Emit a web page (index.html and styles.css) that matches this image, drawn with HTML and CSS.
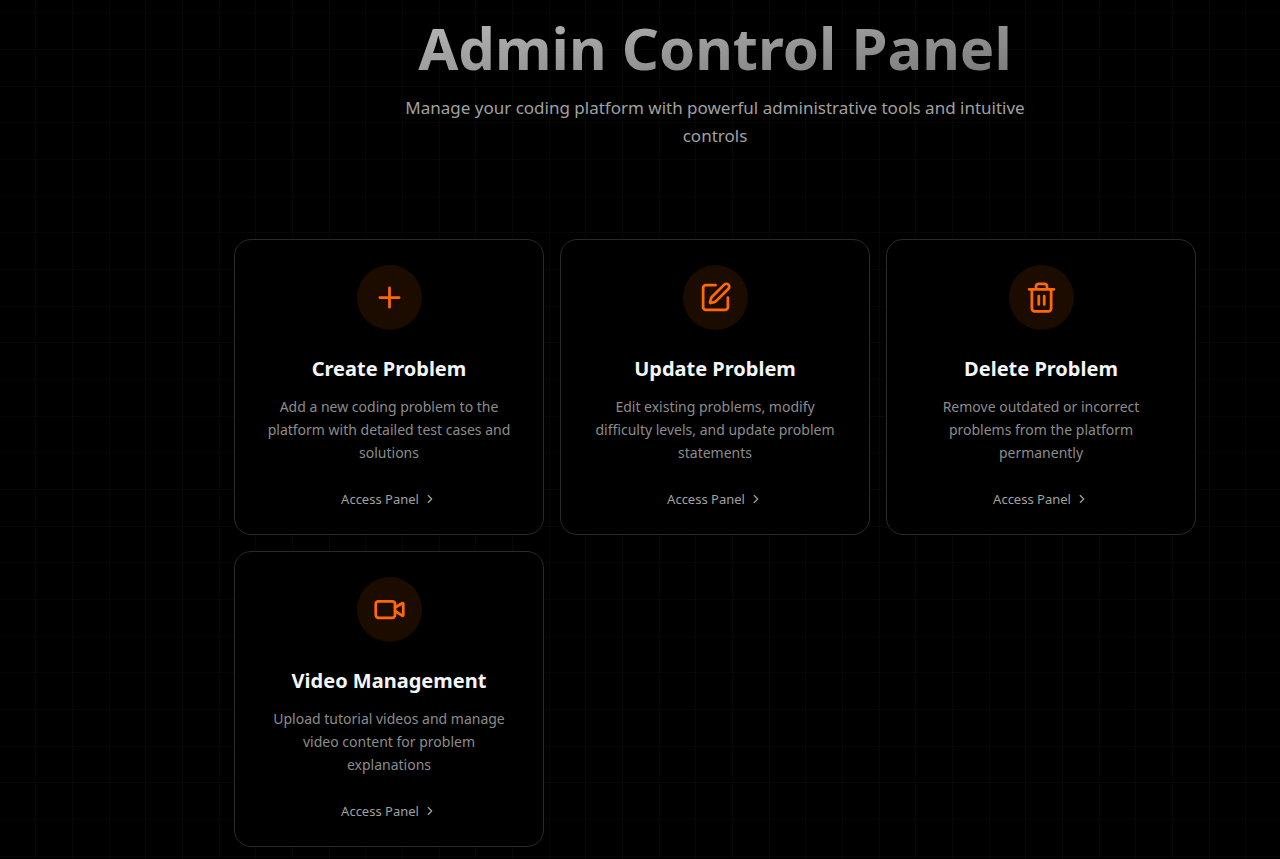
FILE: index.html
```html
<!DOCTYPE html>
<html lang="en">
<head>
<meta charset="utf-8">
<meta name="viewport" content="width=device-width, initial-scale=1">
<title>Admin Control Panel</title>
<link rel="stylesheet" href="styles.css">
</head>
<body>
<main class="page">
  <header class="hero">
    <h1 class="hero-title">Admin Control Panel</h1>
    <p class="hero-subtitle">Manage your coding platform with powerful administrative tools and intuitive controls</p>
  </header>
  <section class="cards">
    <article class="card">
      <div class="card-icon">
        <svg class="icon" viewBox="0 0 24 24" aria-hidden="true"><path d="M12 5v14M5 12h14"/></svg>
      </div>
      <h2 class="card-title">Create Problem</h2>
      <p class="card-text">Add a new coding problem to the platform with detailed test cases and solutions</p>
      <a class="card-link" href="#create">Access Panel
        <svg class="chevron" viewBox="0 0 24 24" aria-hidden="true"><path d="m9 18 6-6-6-6"/></svg></a>
    </article>
    <article class="card">
      <div class="card-icon">
        <svg class="icon" viewBox="0 0 24 24" aria-hidden="true"><path d="M12 3H5a2 2 0 0 0-2 2v14a2 2 0 0 0 2 2h14a2 2 0 0 0 2-2v-7"/><path d="M18.375 2.625a1 1 0 0 1 3 3l-9.013 9.014a2 2 0 0 1-.853.505l-2.873.84a.5.5 0 0 1-.62-.62l.84-2.873a2 2 0 0 1 .506-.852z"/></svg>
      </div>
      <h2 class="card-title">Update Problem</h2>
      <p class="card-text">Edit existing problems, modify difficulty levels, and update problem statements</p>
      <a class="card-link" href="#update">Access Panel
        <svg class="chevron" viewBox="0 0 24 24" aria-hidden="true"><path d="m9 18 6-6-6-6"/></svg></a>
    </article>
    <article class="card">
      <div class="card-icon">
        <svg class="icon" viewBox="0 0 24 24" aria-hidden="true"><path d="M3 6h18M19 6v14a2 2 0 0 1-2 2H7a2 2 0 0 1-2-2V6M8 6V4a2 2 0 0 1 2-2h4a2 2 0 0 1 2 2v2M10 11v6M14 11v6"/></svg>
      </div>
      <h2 class="card-title">Delete Problem</h2>
      <p class="card-text">Remove outdated or incorrect problems from the platform permanently</p>
      <a class="card-link" href="#delete">Access Panel
        <svg class="chevron" viewBox="0 0 24 24" aria-hidden="true"><path d="m9 18 6-6-6-6"/></svg></a>
    </article>
    <article class="card">
      <div class="card-icon">
        <svg class="icon" viewBox="0 0 24 24" aria-hidden="true"><path d="m16 13 5.223 3.482a.5.5 0 0 0 .777-.416V7.87a.5.5 0 0 0-.752-.432L16 10.5"/><rect x="2" y="6" width="14" height="12" rx="2"/></svg>
      </div>
      <h2 class="card-title">Video Management</h2>
      <p class="card-text">Upload tutorial videos and manage video content for problem explanations</p>
      <a class="card-link" href="#video">Access Panel
        <svg class="chevron" viewBox="0 0 24 24" aria-hidden="true"><path d="m9 18 6-6-6-6"/></svg></a>
    </article>
  </section>
</main>
</body>
</html>
```
FILE: styles.css
```css
* { box-sizing: border-box; }

body {
  margin: 0;
  min-height: 100vh;
  color: #f5f5f5;
  font-family: "Segoe UI", "Noto Sans", "Open Sans", sans-serif;
  background-color: #000;
  /* three grid lines per 110px tile */
  background-image:
    linear-gradient(to right, #070707 1px, transparent 1px 37px, #070707 37px 38px, transparent 38px 74px, #070707 74px 75px, transparent 75px),
    linear-gradient(to bottom, #070707 1px, transparent 1px 37px, #070707 37px 38px, transparent 38px 74px, #070707 74px 75px, transparent 75px);
  background-size: 110px 110px;
  background-position: 35px 12px;
}

.page {
  padding: 12px 16px 12px 166px;
}

.hero {
  max-width: 640px;
  margin: 0 auto 89px;
  text-align: center;
}

.hero-title {
  margin: 0 0 10px;
  font-size: 58px;
  line-height: 72px;
  font-weight: 700;
  white-space: nowrap;
  color: transparent;
  background: linear-gradient(to bottom right, #bcbcbc, #747474);
  background-clip: text;
  -webkit-background-clip: text;
}

.hero-subtitle {
  margin: 0;
  font-size: 17px;
  line-height: 28px;
  color: #a1a1a1;
}

.cards {
  display: grid;
  grid-template-columns: repeat(3, 1fr);
  gap: 16px;
  max-width: 962px;
  margin: 0 auto;
}

.card {
  display: flex;
  flex-direction: column;
  align-items: center;
  padding: 25px;
  border: 1px solid #2a2a2a;
  border-radius: 17px;
  background: #000;
  text-align: center;
}

.card-icon {
  display: grid;
  place-items: center;
  width: 65px;
  height: 65px;
  margin-bottom: 25px;
  border-radius: 50%;
  background: #1c0c00;
}

.icon {
  width: 33px;
  height: 33px;
  fill: none;
  stroke: #ff6900;
  stroke-width: 2;
  stroke-linecap: round;
  stroke-linejoin: round;
}

.card-title {
  margin: 0 0 12px;
  font-size: 20px;
  line-height: 28px;
  font-weight: 700;
}

.card-text {
  margin: 0 0 25px;
  font-size: 14px;
  line-height: 23px;
  color: #8c8c8c;
}

.card-link {
  display: inline-flex;
  align-items: center;
  gap: 4px;
  font-size: 13px;
  line-height: 20px;
  color: #a1a1a1;
  text-decoration: none;
}

.chevron {
  width: 14px;
  height: 14px;
  fill: none;
  stroke: currentColor;
  stroke-width: 2;
  stroke-linecap: round;
  stroke-linejoin: round;
}
```
